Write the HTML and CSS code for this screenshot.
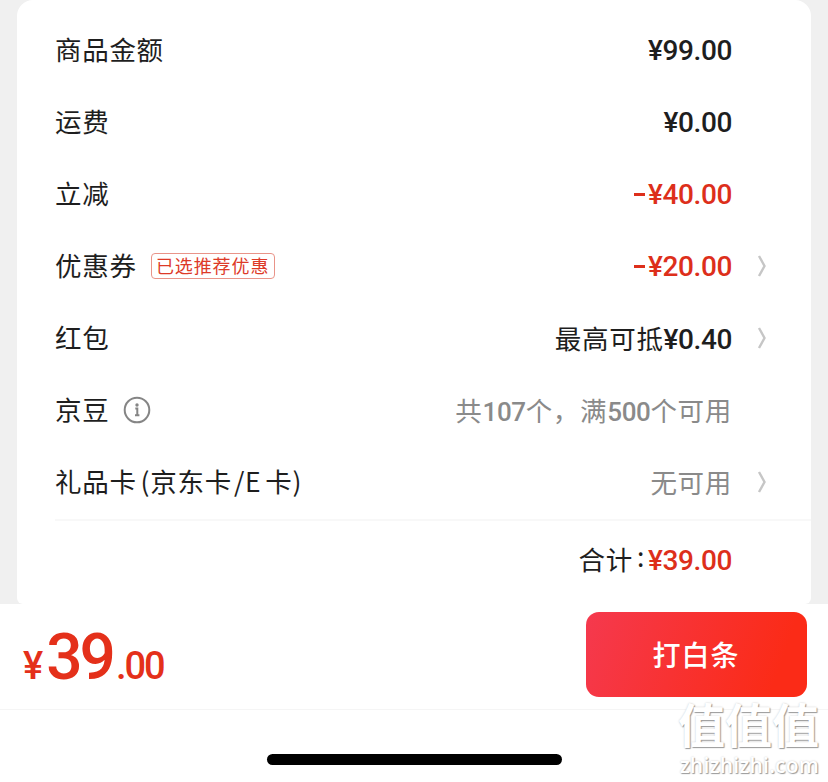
FILE: index.html
```
<!DOCTYPE html>
<html lang="zh-CN">
<head>
    <meta charset="UTF-8">
    <meta name="viewport" content="width=device-width, initial-scale=1.0">
    <title>结算</title>
    <link rel="stylesheet" href="styles.css">
</head>
<body>
    <div class="card">
        <div class="row">
            <span class="label">商品金额</span>
            <span class="price">¥99.00</span>
        </div>
        <div class="row">
            <span class="label">运费</span>
            <span class="price">¥0.00</span>
        </div>
        <div class="row">
            <span class="label">立减</span>
            <span class="price red"><span class="minus"></span>¥40.00</span>
        </div>
        <div class="row">
            <span class="label">优惠券</span>
            <span class="tag">已选推荐优惠</span>
            <span class="price red"><span class="minus"></span>¥20.00</span>
            <svg class="arrow" viewBox="0 0 12 24"><path d="M3 2L8.5 12L3 22"/></svg>
        </div>
        <div class="row">
            <span class="label">红包</span>
            <span class="price mixed"><span class="cjk">最高可抵</span>¥0.40</span>
            <svg class="arrow" viewBox="0 0 12 24"><path d="M3 2L8.5 12L3 22"/></svg>
        </div>
        <div class="row">
            <span class="label">京豆</span>
            <svg class="info" viewBox="0 0 28 28">
                <circle cx="14" cy="14" r="12.3"/>
                <path d="M12.3 12.6H14.3V18.8M12 19.2H16.4"/>
                <circle class="dot" cx="14" cy="9" r="1.7"/>
            </svg>
            <span class="price mixed gray"><span class="cjk">共</span>107<span class="cjk">个，满</span>500<span class="cjk">个可用</span></span>
        </div>
        <div class="row">
            <span class="label">礼品卡<span class="paren">(</span>京东卡<span class="slash">/E</span>卡)</span>
            <span class="price mixed gray"><span class="cjk">无可用</span></span>
            <svg class="arrow" viewBox="0 0 12 24"><path d="M3 2L8.5 12L3 22"/></svg>
        </div>
        <div class="total">
            <span class="label">合计<span class="colon">:</span></span>
            <span class="price red">¥39.00</span>
        </div>
    </div>

    <div class="footer">
        <div class="pay-price"><span class="yen">¥</span><span class="big">39</span><span class="cents">.00</span></div>
        <button class="pay-button">打白条</button>
    </div>

    <div class="home">
        <div class="home-bar"></div>
    </div>

    <div class="watermark">
        <div class="wm-name">值值值</div>
        <div class="wm-site">zhizhizhi.com</div>
    </div>
</body>
</html>
```
FILE: styles.css
```
* {
    box-sizing: border-box;
}
body {
    margin: 0;
    height: 782px;
    overflow: hidden;
    position: relative;
    background-color: #f0f0f0;
    font-family: Roboto, "Noto Sans CJK SC", sans-serif;
    color: #1e1e1e;
}
.card {
    margin: 0 17px;
    height: 604px;
    padding: 14px 0 0 38px;
    background-color: #fff;
    border-radius: 16px 16px 6px 6px;
}
.row {
    display: flex;
    align-items: center;
    height: 72px;
    padding-right: 79px;
}
.label, .cjk {
    font-family: "Noto Sans CJK SC", sans-serif;
    font-size: 26.5px;
    font-weight: 400;
    letter-spacing: 0.7px;
    line-height: 36px;
    white-space: nowrap;
}
.label {
    padding-bottom: 2px;
}
.price {
    margin-left: auto;
    padding-top: 1px;
    font-size: 28px;
    font-weight: 500;
    letter-spacing: -0.4px;
    line-height: 36px;
    white-space: nowrap;
}
.red {
    color: #dd2f1b;
}
.gray {
    color: #8a8a8a;
    font-size: 26px;
}
.minus {
    display: inline-block;
    width: 11px;
    height: 3px;
    margin-right: 3px;
    vertical-align: 8px;
    background-color: #dd2f1b;
}
.tag {
    margin-left: 14px;
    width: 124px;
    height: 26px;
    border: 1px solid #e99489;
    border-radius: 4px;
    color: #dd3a28;
    font-family: "Noto Sans CJK SC", sans-serif;
    font-size: 18px;
    letter-spacing: 0.9px;
    line-height: 23px;
    text-align: center;
    white-space: nowrap;
}
.arrow {
    width: 12px;
    height: 24px;
    margin-left: 24px;
    margin-right: -36px;
    fill: none;
    stroke: #c6c6c6;
    stroke-width: 2.4;
}
.info {
    width: 28px;
    height: 28px;
    margin-left: 14px;
    fill: none;
    stroke: #858585;
    stroke-width: 2;
}
.info .dot {
    fill: #858585;
    stroke: none;
}
.paren {
    margin-left: 4px;
}
.slash {
    margin: 0 4px 0 2px;
}
.total {
    display: flex;
    justify-content: flex-end;
    align-items: center;
    height: 82px;
    margin-top: 1px;
    padding-right: 79px;
    border-top: 2px solid #f8f8f8;
}
.total .label {
    padding-bottom: 4px;
}
.total .price {
    margin-left: 0;
    padding-top: 0;
}
.colon {
    margin: 0 3px 0 4px;
    vertical-align: 3px;
    line-height: 1;
}
.footer {
    display: flex;
    justify-content: space-between;
    align-items: flex-start;
    height: 106px;
    padding: 8px 21px 0 23px;
    background-color: #fff;
    border-bottom: 1px solid #f5f5f5;
}
.pay-price {
    padding-top: 6px;
    color: #e4301a;
    font-size: 38px;
    font-weight: 500;
    line-height: 80px;
    white-space: nowrap;
}
.big {
    margin: 0 3px 0 3px;
    font-size: 64px;
    letter-spacing: -3px;
}
.cents {
    letter-spacing: -2px;
}
.pay-button {
    width: 221px;
    height: 85px;
    padding: 0 1px 2px 0;
    border: none;
    border-radius: 13px;
    background: linear-gradient(110deg, #f5394e, #fb2b17 85%);
    color: #fff;
    font-family: "Noto Sans CJK SC", sans-serif;
    font-size: 28px;
    font-weight: 500;
    letter-spacing: 1px;
}
.home {
    display: flex;
    justify-content: center;
    align-items: center;
    height: 72px;
    padding-top: 27px;
    background-color: #fff;
}
.home-bar {
    width: 295px;
    height: 11px;
    border-radius: 6px;
    background-color: #000;
}
/* site mark, lies over the bottom corner */
.watermark {
    position: absolute;
    right: 9px;
    bottom: 3px;
    color: #fff;
    text-align: right;
    text-shadow: 1px 1px 1px #999, 0 0 2px #ccc;
    white-space: nowrap;
}
.wm-name {
    font-family: "Noto Sans CJK SC", sans-serif;
    font-size: 47px;
    font-weight: 700;
    line-height: 56px;
}
.wm-site {
    font-family: "Open Sans", sans-serif;
    font-size: 21px;
    font-weight: 600;
    letter-spacing: 0.2px;
    line-height: 28px;
}
```
